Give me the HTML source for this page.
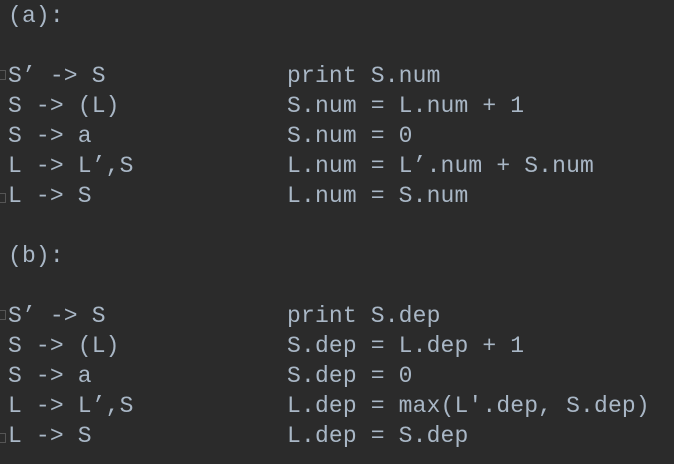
<!DOCTYPE html>
<html><head><style>
html,body{margin:0;padding:0;background:#2b2b2b;width:674px;height:464px;overflow:hidden}
pre{margin:0;position:absolute;left:8px;top:1px;font-family:"Liberation Mono","DejaVu Sans Mono",monospace;font-size:23px;line-height:30px;color:#a9b7c6;letter-spacing:0.15px}
.m{position:absolute;left:0;width:6px;height:10px;border:1px solid #555;border-left:none;box-sizing:border-box}
</style></head><body>
<pre>(a):

S’ -> S             print S.num
S -> (L)            S.num = L.num + 1
S -> a              S.num = 0
L -> L’,S           L.num = L’.num + S.num
L -> S              L.num = S.num

(b):

S’ -> S             print S.dep
S -> (L)            S.dep = L.dep + 1
S -> a              S.dep = 0
L -> L’,S           L.dep = max(L'.dep, S.dep)
L -> S              L.dep = S.dep</pre>
<div class="m" style="top:70px"></div>
<div class="m" style="top:193px"></div>
<div class="m" style="top:310px"></div>
<div class="m" style="top:433px"></div>
</body></html>
